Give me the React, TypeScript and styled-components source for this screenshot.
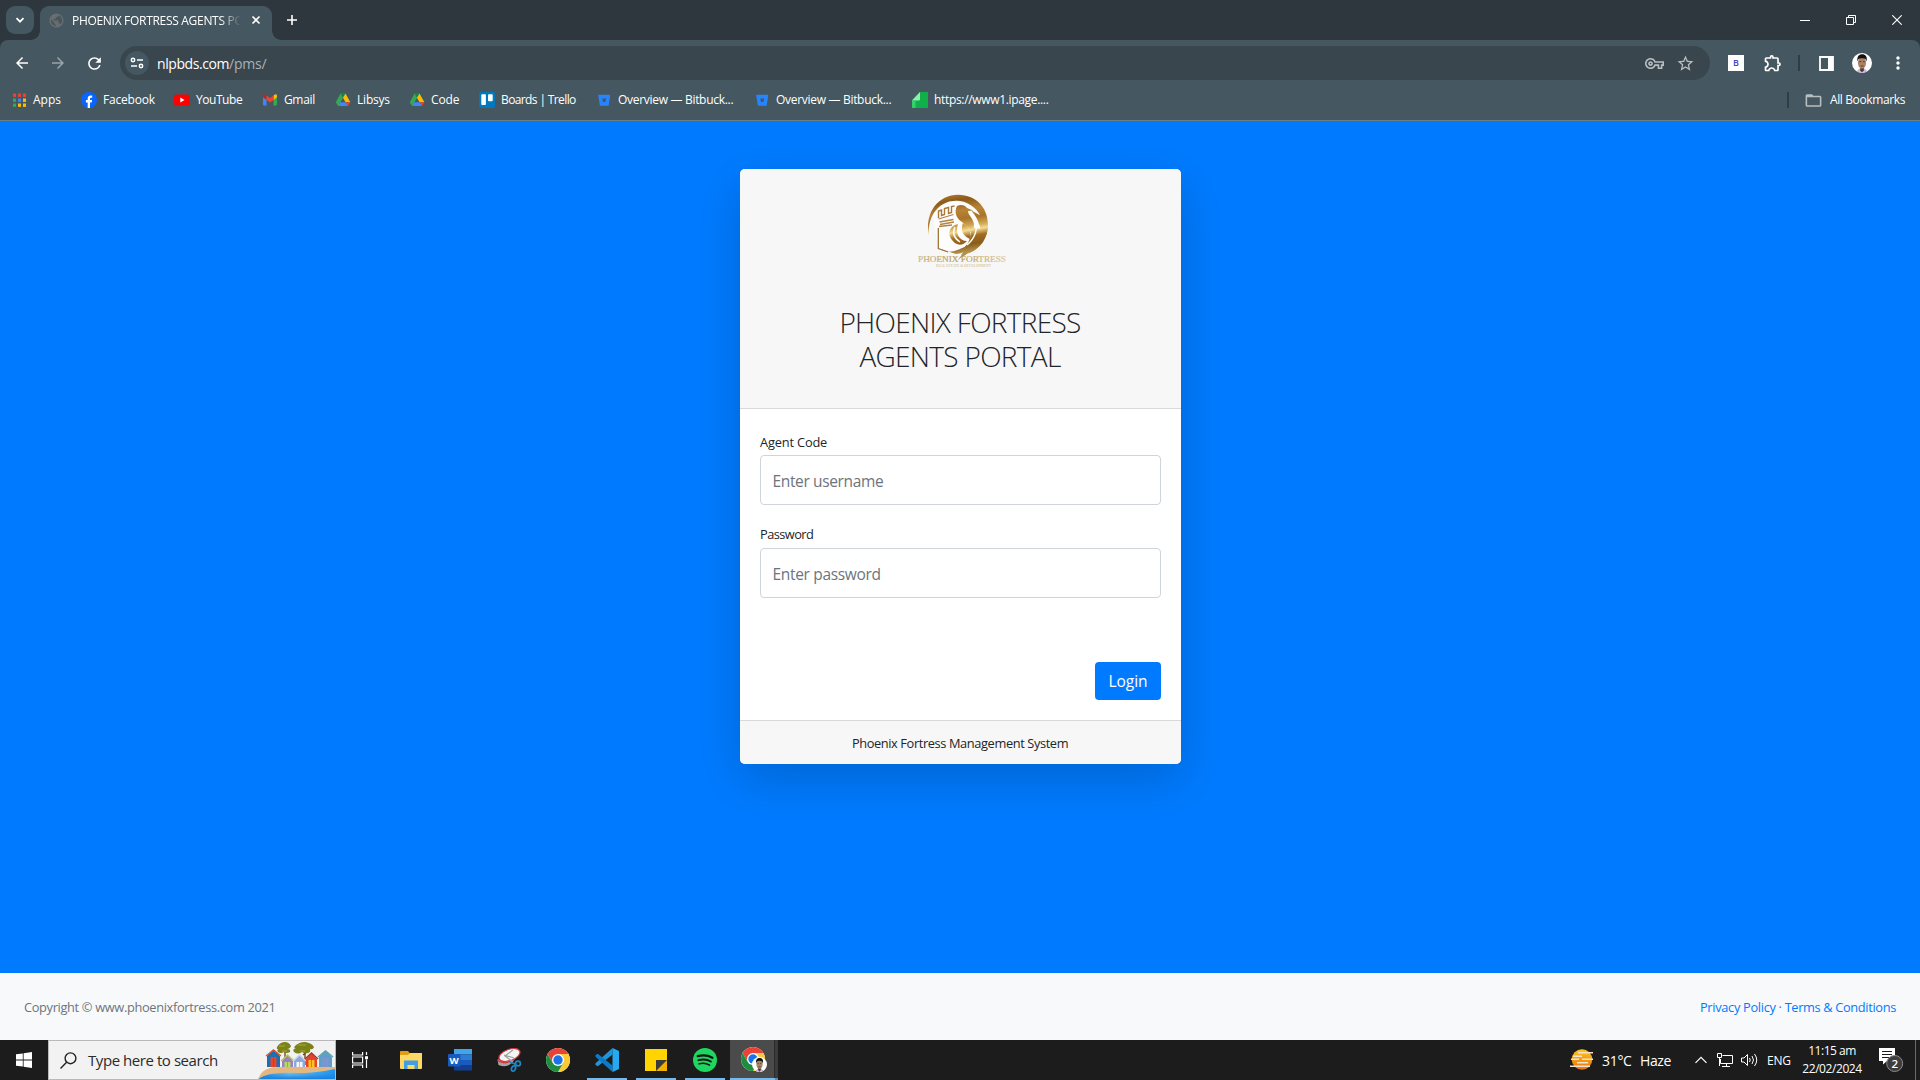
import React from "react";
import styled, { createGlobalStyle, css } from "styled-components";
import {
  MdArrowBack, MdArrowForward, MdRefresh, MdMoreVert, MdFolderOpen, MdPublic,
  MdOutlineVpnKey, MdStarBorder, MdOutlineExtension,
} from "react-icons/md";
import { FaBitbucket } from "react-icons/fa";

const Global = createGlobalStyle`
  * { box-sizing: border-box; }
  html, body { margin: 0; padding: 0; overflow: hidden; }
  body { font-family: "Open Sans", "Noto Sans", sans-serif; }
  svg { display: block; flex: none; }
`;

const Screen = styled.div`
  width: 1920px; height: 1080px; display: flex; flex-direction: column; overflow: hidden;
  background: #007bff;
`;

const Text = styled.span<{ $size?: number; $track?: number; $color?: string; $weight?: number }>`
  font-size: ${(p) => p.$size ?? 12}px;
  letter-spacing: ${(p) => p.$track ?? 0}px;
  color: ${(p) => p.$color ?? "inherit"};
  font-weight: ${(p) => p.$weight ?? 400};
  white-space: nowrap;
`;

/* ---------- browser ---------- */
const TabStrip = styled.div`
  height: 40px; flex: none; background: #2d373d; display: flex; color: #fff;
`;
const TabSearch = styled.div`
  width: 28px; height: 28px; margin: 6px 6px 0; border-radius: 9px; background: #455760;
  display: flex; align-items: center; justify-content: center;
`;
const Tab = styled.div`
  width: 232px; height: 34px; margin-top: 6px; padding: 0 11px 6px 8px; border-radius: 9px 9px 0 0;
  background: #455760; display: flex; align-items: center; position: relative; color: #fff;
  &::before, &::after {
    content: ""; position: absolute; bottom: 0; width: 9px; height: 9px;
  }
  &::before { left: -9px; background: radial-gradient(circle at 0 0, transparent 8.5px, #455760 9px); }
  &::after { right: -9px; background: radial-gradient(circle at 100% 0, transparent 8.5px, #455760 9px); }
`;
const TabTitle = styled.div`
  width: 169px; margin: 0 auto 0 7px; overflow: hidden; line-height: 16px; height: 18px; white-space: nowrap;
  -webkit-mask-image: linear-gradient(90deg, #000 148px, transparent 169px);
  mask-image: linear-gradient(90deg, #000 148px, transparent 169px);
`;
const NewTab = styled.div`
  width: 28px; height: 28px; margin: 6px 0 0 6px; display: flex; align-items: center; justify-content: center;
`;
const WindowButtons = styled.div`
  margin-left: auto; display: flex;
`;
const WindowButton = styled.div`
  width: 46px; height: 40px; display: flex; align-items: center; justify-content: center;
`;
const Toolbar = styled.div`
  height: 40px; flex: none; background: #2d373d;
`;
const ToolbarInner = styled.div`
  height: 40px; background: #455760; border-radius: 8px 8px 0 0; display: flex; align-items: center;
  padding: 6px 11px 0 11px; color: #fff;
`;
const NavButton = styled.div<{ $dim?: boolean }>`
  width: 22px; height: 34px; margin-right: 14px; display: flex; align-items: center; justify-content: center;
  opacity: ${(p) => (p.$dim ? 0.45 : 1)};
`;
const Omnibox = styled.div`
  width: 1590px; height: 34px; margin-left: 1px; border-radius: 17px; background: #39464d; display: flex; align-items: center;
  padding: 0 15px 0 5px;
`;
const SiteInfo = styled.div`
  width: 24px; height: 24px; border-radius: 50%; background: #455760; margin-right: 8px;
  display: flex; align-items: center; justify-content: center;
`;
const OmniIcons = styled.div`
  margin-left: auto; display: flex; align-items: center; gap: 12px; color: #b9bec1;
`;
const ExtBadge = styled.div`
  width: 16px; height: 16px; margin-left: 18px; background: #fff; color: #4747b8; font-size: 9px; line-height: 16px;
  text-align: center; font-weight: 600;
`;
const ToolIcon = styled.div<{ $left: number }>`
  margin-left: ${(p) => p.$left}px; display: flex;
`;
const Divider = styled.div<{ $left: number }>`
  width: 2px; height: 16px; margin-left: ${(p) => p.$left}px; background: #313d44;
`;
const Bookmarks = styled.div`
  height: 41px; flex: none; background: #455760; border-bottom: 1px solid #6f7d84; display: flex;
  align-items: center; padding-left: 11px; color: #fff;
`;
const Bookmark = styled.div<{ $w: number }>`
  width: ${(p) => p.$w}px; display: flex; align-items: center; gap: 6px; line-height: 16px; height: 16px;
`;
const IconBox = styled.div` width: 16px; display: flex; justify-content: center; flex: none; `;
const BookmarksEnd = styled.div`
  margin-left: auto; display: flex; align-items: center; padding-right: 14px;
`;
const AllLabel = styled.div` margin-left: 7px; line-height: 16px; height: 16px; display: flex; width: 76px; `;

/* ---------- page ---------- */
const Page = styled.div`
  flex: 1; display: flex; flex-direction: column; align-items: center; justify-content: space-between;
  color: #212529; min-height: 0;
`;
const Card = styled.div`
  width: 441px; height: 595px; margin: 48px 0 0 1px; border-radius: 5px; background: #fff; overflow: hidden;
  box-shadow: 0 16px 48px rgba(0, 0, 0, 0.175); display: flex; flex-direction: column;
`;
const CardHeader = styled.div`
  height: 240px; flex: none; background: #f7f7f7; border-bottom: 1px solid #d9d9d9;
  display: flex; flex-direction: column; align-items: center; padding: 16px 1px 0 0;
`;
const Heading = styled.h3`
  margin: 30px 0 0; font-weight: 300; text-align: center;
  display: flex; flex-direction: column; align-items: center;
`;
const HeadingLine = styled.div` height: 34px; line-height: 34px; `;
const CardBody = styled.div`
  flex: 1; padding: 20px 20px 20px; display: flex; flex-direction: column;
`;
const Field = styled.label`
  display: flex; flex-direction: column; margin-bottom: 17px;
`;
const FieldLabel = styled.div<{ $line?: number }>`
  height: 26px; line-height: ${(p) => p.$line ?? 25}px; display: flex;
`;
const Input = styled.div`
  height: 50px; border: 1px solid #ced4da; border-radius: 4px; background: #fff; color: #6c757d;
  display: flex; align-items: center; padding: 2px 12px 0 11.5px;
`;
const LoginButton = styled.div`
  align-self: flex-end; margin-top: auto; width: 66px; height: 38px; border-radius: 4px; background: #007bff; color: #fff;
  display: flex; align-items: center; justify-content: center;
`;
const CardFooter = styled.div`
  height: 44px; flex: none; background: #f7f7f7; border-top: 1px solid #d9d9d9; display: flex; align-items: center;
  justify-content: center; padding-right: 1px;
`;
const PageFooter = styled.div`
  align-self: stretch; height: 67px; background: #f8f9fa; display: flex; align-items: center; padding: 0 24px;
  color: #6c757d;
`;
const Links = styled.div` margin-left: auto; display: flex; color: #007bff; `;
const Dot = styled.span` width: 9px; text-align: center; color: #6c757d; font-size: 13px; `;

/* ---------- taskbar ---------- */
const Taskbar = styled.div`
  height: 40px; flex: none; background: #1c1c1c; display: flex; color: #fff;
`;
const Start = styled.div` width: 48px; display: flex; align-items: center; justify-content: center; `;
const Search = styled.div`
  width: 288px; height: 40px; background: #f2f2f2; border: 1px solid #b9b9b9; display: flex; align-items: center;
  padding-left: 11px; color: #2b2b2b;
`;
const SearchText = styled.div` margin-left: 11px; width: 133px; display: flex; `;
const SearchArt = styled.div` margin-left: auto; align-self: flex-end; height: 38px; `;
const TaskItem = styled.div<{ $line?: boolean; $active?: boolean; $ml?: number }>`
  width: 48px; height: 40px; margin-left: ${(p) => p.$ml ?? 1}px; display: flex; align-items: center; justify-content: center;
  ${(p) => p.$line && css`background: linear-gradient(#76b9ed, #76b9ed) 4px 38px / 40px 2px no-repeat;`}
  ${(p) => p.$active && css`background: linear-gradient(#76b9ed, #76b9ed) 0 38px / 45px 2px no-repeat,
    linear-gradient(#5788b0, #5788b0) 45px 38px / 3px 2px no-repeat,
    linear-gradient(#2a2a2a, #2a2a2a) 44px 0 / 1px 40px no-repeat,
    linear-gradient(90deg, #4b4b4b 44px, #3b3b3b 44px);`}
`;
const Tray = styled.div` margin-left: auto; display: flex; align-items: center; padding-right: 4px; `;
const TrayCell = styled.div<{ $w: number; $pad?: number }>`
  width: ${(p) => p.$w}px; padding-left: ${(p) => p.$pad ?? 0}px; display: flex; align-items: center;
`;
const Clock = styled.div` width: 76px; display: flex; flex-direction: column; align-items: center; line-height: 18px; `;
const DesktopEdge = styled.div` width: 1px; height: 40px; background: #6b6b6b; `;

/* ---------- drawings ---------- */
const AppsIcon = () => {
  const c = ["#ea4335", "#ea4335", "#ea4335", "#34a853", "#4285f4", "#fbbc04", "#34a853", "#fbbc04", "#fbbc04"];
  return (
    <svg width="16" height="16">
      {c.map((f, i) => <rect key={i} x={2 + (i % 3) * 5} y={1.5 + Math.floor(i / 3) * 5} width="3" height="3.4" fill={f} />)}
    </svg>
  );
};
const FacebookIcon = () => (
  <svg width="16" height="16" viewBox="0 0 16 16">
    <circle cx="8" cy="8" r="8" fill="#0866ff" />
    <path d="M6.7 15.9V10.4H4.9V8h1.8V6.8c0-2.2 1-3.3 3.1-3.3.4 0 1.1.1 1.4.2v2h-.8c-1 0-1.4.4-1.4 1.4V8h2.1l-.4 2.4H9v5.5z" fill="#fff" />
  </svg>
);
const YouTubeIcon = () => (
  <svg width="16" height="16" viewBox="0 0 16 16">
    <rect y="2.5" width="16" height="11" rx="2.6" fill="#f00" />
    <path d="M6.3 5.6v4.8L10.5 8z" fill="#fff" />
  </svg>
);
const GmailIcon = () => (
  <svg width="16" height="16" viewBox="0 0 16 16">
    <path d="M1 4.5l3.5 2.6v6.4H2a1 1 0 0 1-1-1z" fill="#4285f4" />
    <path d="M15 4.5l-3.5 2.6v6.4H14a1 1 0 0 0 1-1z" fill="#34a853" />
    <path d="M11.5 3.5L13 2.6c1-.6 2 0 2 1.2v1.4l-3.5 2.7z" fill="#fbbc04" />
    <path d="M1 3.8c0-1.2 1-1.8 2-1.2l1.5.9v4.4L1 5.2z" fill="#c5221f" />
    <path d="M4.5 3.5L8 6.1l3.5-2.6v4.4L8 10.5 4.5 7.9z" fill="#ea4335" />
  </svg>
);
const DriveIcon = () => (
  <svg width="16" height="16" viewBox="0 0 16 16">
    <path d="M5.5 1.5h5L5 11.3 3 14 .8 10.3z" fill="#34a853" />
    <path d="M5.5 1.5h5L8 5.7z" fill="#188038" />
    <path d="M8 5.7l2.5-4.2 4.9 8.8h-4.9z" fill="#fbbc04" />
    <path d="M15.4 10.3L13 14l-2.5-3.7z" fill="#ea4335" />
    <path d="M5.5 10.3h5L13 14H3z" fill="#4285f4" />
  </svg>
);
const TrelloIcon = () => (
  <svg width="16" height="16" viewBox="0 0 16 16">
    <rect width="16" height="16" rx="2" fill="#0079bf" />
    <rect x="2.3" y="2.3" width="4.6" height="10.7" rx=".8" fill="#fff" />
    <rect x="9" y="2.3" width="4.7" height="7" rx=".8" fill="#fff" />
  </svg>
);
const PageIcon = () => (
  <svg width="16" height="16" viewBox="0 0 16 16">
    <path d="M8 0h7a1 1 0 0 1 1 1v14a1 1 0 0 1-1 1H1a1 1 0 0 1-1-1V8z" fill="#0fb04a" />
    <path d="M8 0v7.5a1 1 0 0 1-1 1H0z" fill="#8ff0ae" />
    <path d="M0 8.5h3.5V16H1a1 1 0 0 1-1-1z" fill="#35cf6b" />
  </svg>
);
const Face = ({ size }: { size: number }) => (
  <svg width={size} height={size} viewBox="0 0 20 20">
    <circle cx="10" cy="10" r="10" fill="#fff" />
    <path d="M4.5 18.2l3-2.7h5l3 2.7Q10 21.5 4.5 18.2z" fill="#c9b7d6" />
    <path d="M8.2 14h3.6v3.2L10 19.5l-1.8-2.3z" fill="#4a3a3a" />
    <ellipse cx="10" cy="9.8" rx="4.1" ry="5.9" fill="#a98467" />
    <path d="M5.5 8.5C4.7 3.2 7 1.2 10.2 1.2s5.4 2.1 4.3 7.3l-.8-2.3C12 4.8 8 4.8 6.3 6.2z" fill="#12110f" />
    <path d="M7.2 8.7h2m1.6 0h2M8.5 13h3" stroke="#4d382c" strokeWidth=".9" />
  </svg>
);
const ChromeIcon = ({ size }: { size: number }) => (
  <svg width={size} height={size} viewBox="0 0 24 24">
    <circle cx="12" cy="12" r="12" fill="#fff" />
    <path d="M12 6h10.39A12 12 0 0 0 1.61 6L6.8 15z" fill="#ea4335" />
    <path d="M17.2 15L12 24A12 12 0 0 0 22.39 6H12z" fill="#fcc934" />
    <path d="M6.8 15L1.61 6A12 12 0 0 0 12 24l5.2-9z" fill="#1e8e3e" />
    <circle cx="12" cy="12" r="6" fill="#fff" />
    <circle cx="12" cy="12" r="4.7" fill="#1a73e8" />
  </svg>
);
const ActiveChrome = () => (
  <svg width="26" height="26" viewBox="0 0 26 26">
    <ChromeIcon size={24} />
    <svg x="11" y="10"><Face size={15} /></svg>
  </svg>
);

const Logo = () => (
  <svg width="120" height="90" viewBox="0 0 120 90">
    <defs>
      <linearGradient id="gold" gradientUnits="userSpaceOnUse" x1="50" y1="10" x2="60" y2="70">
        <stop offset="0" stopColor="#a87832" /><stop offset=".1" stopColor="#8b5a18" />
        <stop offset=".28" stopColor="#b98435" /><stop offset=".42" stopColor="#a8742a" />
        <stop offset=".55" stopColor="#d3a954" /><stop offset=".62" stopColor="#f3dc94" />
        <stop offset=".72" stopColor="#a26d22" /><stop offset=".85" stopColor="#8a5c1c" />
        <stop offset="1" stopColor="#bfa05a" />
      </linearGradient>
      <linearGradient id="letters" x1="0" x2="1">
        <stop offset="0" stopColor="#cdb985" /><stop offset=".45" stopColor="#b99d5c" /><stop offset="1" stopColor="#dccb9c" />
      </linearGradient>
    </defs>
    <path d="M33 28L50 17h16l16 12v20L66 67l-12 2-16-4z" fill="#fdfdfd" />
    <path d="M29 51C24 27 39 9.8 58 9.8c19 0 30 14 30 30.500 0 13-8 23.500-18 27.500l-8 2.500c2-3 5-5 5-8 6-5 9-11 9-17 5-1 5-3 3-6-1-5-4-9-8-14l9 5c-4-8-12-13.500-22-14.500C42 14.500 27 28 29 51z" fill="url(#gold)" />
    <path d="M71 41q6 6 17-1-1 18-17 27l-10 3q4-5 4-8 7-7 6-21z" fill="url(#gold)" />
    <path d="M57 21c4-2 8-1 10 2l6 2.500-5 .5c0 4 5 7 6 13 0 4-1 6-3 9-2-5-5-8-9-11-6-4-8-10-5-16z" fill="url(#gold)" />
    <path d="M58 39c-9 2-11 10-6 16 4 6 11 6 15 1-8 0-12-8-9-17z" fill="url(#gold)" />
    <path d="M63 38c-3 7 0 13 7 16 2-6-1-12-7-16zM40 64c6 4 13 3 20 0 4-2 8-3 10-7 0 8-8 12-14 12z" fill="url(#gold)" />
    <path d="M55 42c-3 6-1 11 5 15M75 33c4 13-1 21-8 27" fill="none" stroke="#fffdf4" strokeWidth="1.5" />
    <path d="M38.5 33v-7l3-1v5.500l3-1v-6l4-1v6l3-1v-6l3-.5" fill="none" stroke="#a97836" strokeWidth="1.4" />
    <path d="M38.500 34l15-4.500M39.500 37l14-2.500M40 39.500l14-2.500M39 41.500l13-1.500" fill="none" stroke="#b28443" strokeWidth="1.300" />
    <path d="M38.300 43v20.500l10 3.500" fill="none" stroke="#9b7433" strokeWidth="1.300" />
    <path d="M58 75c2-4 5-5 6-9l4 1c-2 4-6 4-10 8z" fill="#b39049" />
    <text x="18" y="76.5" textLength="88" lengthAdjust="spacingAndGlyphs" fontFamily="Liberation Serif, serif" fontSize="8.800" stroke="url(#letters)" strokeWidth=".2" fill="url(#letters)">PHOENIX FORTRESS</text>
    <text x="36" y="81.800" textLength="55" lengthAdjust="spacingAndGlyphs" fontFamily="Liberation Serif, serif" fontSize="3.400" fill="#cdb987">REAL ESTATE &amp; DEVELOPMENT</text>
  </svg>
);

const hutData: [number, string, string, string][] = [
  [10, "#1c6fb5", "#e8452c", "#d9562b"], [25, "#9b7fc7", "#b6d957", "#b7c858"],
  [37, "#8aa9dc", "#f5f7fb", "#c5d6ef"], [49, "#e8412f", "#ffc21c", "#b13427"], [62, "#5f9fca", "#8193d2", "#5aa6a4"],
];
const BeachArt = () => (
  <svg width="78" height="38" viewBox="0 0 78 38">
    <defs>
      <linearGradient id="sea" x1="0" x2="1"><stop offset="0" stopColor="#1c86e0" /><stop offset=".4" stopColor="#a9e6f2" /><stop offset="1" stopColor="#1d93f0" /></linearGradient>
      <linearGradient id="deep" x1="0" y1="0" x2="0" y2="1"><stop offset="0" stopColor="#1d93f0" stopOpacity="0" /><stop offset="1" stopColor="#1580e0" /></linearGradient>
    </defs>
    <path d="M1 38c4-9 9-12 22-12h55v12z" fill="#e3b77f" />
    <path d="M2 38c6-5 18-7 40-6 14 0 26-2 36-4v10z" fill="url(#sea)" />
    <path d="M2 38c6-5 18-7 40-6 14 0 26-2 36-4v10z" fill="url(#deep)" />
    <path d="M28 4v20M48 4v20M46 14l6-5" stroke="#6d4a22" strokeWidth="1.4" />
    <path d="M20 6q3-5 8-5 4 0 6 4-1 3-4 3 4 0 3 3-4 2-6 0-3 2-6 0-2-3 2-3-4 1-3-2zM38 5q4-4 10-4 7 1 9 5-1 3-4 2 1 3-2 4-4 1-6-1-4 3-8 0-2-3 2-4-3 0-1-2z" fill="#7b8218" />
    <path d="M22 5h6M41 4h8M43 10h5M25 10h5" stroke="#a9a93a" strokeWidth="1.2" />
    {hutData.map(([x, wall, door, roof], i) => {
      const t = [9, 14, 14, 12, 10][i];
      const w = i === 0 || i === 4 ? 13 : 11;
      const e = t + 6;
      return (
        <g key={i}>
          <path d={`M${x} ${e}l${w / 2} ${t - e}l${w / 2} ${e - t}V26H${x}z`} fill={wall} />
          <path d={`M${x - 1} ${e}l${w / 2 + 1} ${t - e}l${w / 2 + 1} ${e - t}`} fill="none" stroke={roof} strokeWidth="1.5" />
          <rect x={x + w / 2 - 3} y={e + 1} width="6" height={25 - e} fill={door} />
          <path d={`M${x + w / 2} ${e + 1}V26`} stroke={wall} strokeWidth=".7" />
        </g>
      );
    })}
  </svg>
);

const ExplorerIcon = () => (
  <svg width="24" height="24" viewBox="0 0 24 24">
    <path d="M1 4a1 1 0 0 1 1-1h7l2 2.5h11.5V20H1z" fill="#e09c12" />
    <path d="M1 7h8l2-2h12v15a1 1 0 0 1-1 1H2a1 1 0 0 1-1-1z" fill="#ffd767" />
    <path d="M5 12.5h14V21h-3.5v-4h-7v4H5z" fill="#3f9fe0" />
  </svg>
);
const WordIcon = () => (
  <svg width="24" height="24" viewBox="0 0 24 24">
    <path d="M6 1h18v5.5H6z" fill="#41a5ee" /><path d="M6 6.5h18V12H6z" fill="#2b7cd3" />
    <path d="M6 12h18v5H6z" fill="#185abd" /><path d="M6 17h18v5.5H6z" fill="#103f91" />
    <rect x="0" y="6" width="12.5" height="12.5" rx="1" fill="#185abd" />
    <text x="6.2" y="15.8" fontSize="9.5" fontWeight="700" textAnchor="middle" fill="#fff">W</text>
  </svg>
);
const SnipIcon = () => (
  <svg width="26" height="26" viewBox="0 0 26 26">
    <path d="M1.500 13l1 5q9 3.500 14-3l7-9-3-4z" fill="#a3a3a8" />
    <path d="M1.500 12.500l1 1.500q8 4 13-1l8-9" fill="none" stroke="#d5343a" strokeWidth="1.2" />
    <ellipse cx="13.5" cy="8" rx="11" ry="5.6" transform="rotate(-20 13.5 8)" fill="#f4f4f4" stroke="#d5343a" strokeWidth="1.2" />
    <path d="M17 3L9 9l8 6M8 8l10 3" fill="none" stroke="#9aa0a6" strokeWidth="1.2" />
    <circle cx="22" cy="16.5" r="2.4" fill="none" stroke="#1b86c8" strokeWidth="1.7" />
    <ellipse cx="17.5" cy="21.5" rx="1.9" ry="2.8" fill="none" stroke="#1b86c8" strokeWidth="1.7" transform="rotate(25 17.5 21.5)" />
    <path d="M14 15.5l6 1.5M18.5 19l1-3" stroke="#1b86c8" strokeWidth="1.5" />
  </svg>
);
const CodeIcon = () => (
  <svg width="24" height="24" viewBox="0 0 24 24">
    <path d="M17.5 0v6.5L2.8 18.2.5 17v-1.7z" fill="#1f95dc" />
    <path d="M17.5 24v-6.5L2.8 5.8.5 7v1.7z" fill="#0e7ac4" />
    <path d="M17.5 0L24 2.9v18.2L17.5 24z" fill="#27a9f2" />
  </svg>
);
const NotesIcon = () => (
  <svg width="22" height="22" viewBox="0 0 22 22">
    <path d="M0 0h22v22H0z" fill="#ffd400" /><path d="M11 22V11h11v11z" fill="#f2b200" />
    <path d="M11 22V11h11z" fill="#3b3b3b" />
  </svg>
);
const SpotifyIcon = () => (
  <svg width="24" height="24" viewBox="0 0 24 24">
    <circle cx="12" cy="12" r="12" fill="#1ed760" />
    <path d="M4.8 8.2q8-2.2 14.6 1.5" stroke="#161616" strokeWidth="2.3" fill="none" strokeLinecap="round" />
    <path d="M5.4 12.2q7-2 12.5 1.3" stroke="#161616" strokeWidth="1.9" fill="none" strokeLinecap="round" />
    <path d="M5.9 15.9q6-1.6 10.7 1.2" stroke="#161616" strokeWidth="1.5" fill="none" strokeLinecap="round" />
  </svg>
);
const HazeIcon = () => (
  <svg width="24" height="22" viewBox="0 0 24 22">
    <defs><linearGradient id="sun" x1="0" y1="0" x2="0" y2="1"><stop offset="0" stopColor="#ffc81a" /><stop offset="1" stopColor="#e8700f" /></linearGradient></defs>
    <circle cx="12" cy="10.5" r="10.3" fill="url(#sun)" />
    <path d="M8 3.8h15M3 7.2h9M12 10.3h11M1 10.3h8M7 13.8h11M0 17.2h20" stroke="#f3e3cf" strokeWidth="1.5" />
  </svg>
);

const bookmarks: { label: string; w: number; track: number; icon: React.ReactNode }[] = [
  { label: "Apps", w: 70, track: 0, icon: <AppsIcon /> },
  { label: "Facebook", w: 93, track: -0.2, icon: <FacebookIcon /> },
  { label: "YouTube", w: 88, track: -0.45, icon: <YouTubeIcon /> },
  { label: "Gmail", w: 73, track: -0.35, icon: <GmailIcon /> },
  { label: "Libsys", w: 74, track: -0.2, icon: <DriveIcon /> },
  { label: "Code", w: 70, track: -0.1, icon: <DriveIcon /> },
  { label: "Boards | Trello", w: 117, track: -0.62, icon: <TrelloIcon /> },
  { label: "Overview — Bitbuck...", w: 158, track: -0.3, icon: <FaBitbucket size={12.5} color="#2684ff" /> },
  { label: "Overview — Bitbuck...", w: 158, track: -0.3, icon: <FaBitbucket size={12.5} color="#2684ff" /> },
  { label: "https://www1.ipage....", w: 150, track: -0.33, icon: <PageIcon /> },
];

export default function App() {
  return (
    <>
      <Global />
      <Screen>
        <TabStrip>
          <TabSearch>
            <svg width="10" height="8"><path d="M1.5 2.2L5 5.7l3.5-3.5" fill="none" stroke="#fff" strokeWidth="1.8" /></svg>
          </TabSearch>
          <Tab>
            <MdPublic size={17} color="#6a6c6e" />
            <TabTitle><Text $track={-0.3}>PHOENIX FORTRESS AGENTS PO</Text></TabTitle>
            <svg width="10" height="10"><path d="M1.5 1.5l7 7m0-7l-7 7" stroke="#fff" strokeWidth="1.6" /></svg>
          </Tab>
          <NewTab><svg width="12" height="12"><path d="M6 1v10M1 6h10" stroke="#fff" strokeWidth="1.6" /></svg></NewTab>
          <WindowButtons>
            <WindowButton><svg width="10" height="10"><path d="M0 5.5h10" stroke="#fff" /></svg></WindowButton>
            <WindowButton><svg width="10" height="10"><path d="M.5 2.5h7v7h-7zM2.5 2.5v-2h7v7h-2" fill="none" stroke="#fff" /></svg></WindowButton>
            <WindowButton><svg width="10" height="10"><path d="M.3.3l9.4 9.4m0-9.4L.3 9.7" stroke="#fff" strokeWidth="1.1" /></svg></WindowButton>
          </WindowButtons>
        </TabStrip>
        <Toolbar>
          <ToolbarInner>
            <NavButton><MdArrowBack size={18} /></NavButton>
            <NavButton $dim><MdArrowForward size={18} /></NavButton>
            <NavButton><MdRefresh size={19} /></NavButton>
            <Omnibox>
              <SiteInfo>
                <svg width="14" height="14" fill="none" stroke="#fff" strokeWidth="1.5">
                  <circle cx="3" cy="4" r="1.7" /><path d="M7 4h6M1 10h6" /><circle cx="11" cy="10" r="1.7" />
                </svg>
              </SiteInfo>
              <Text $size={14} $track={-0.42}>nlpbds.com</Text>
              <Text $size={14} $track={-0.2} $color="#a9b1b5">/pms/</Text>
              <OmniIcons><MdOutlineVpnKey size={19} /><MdStarBorder size={19} /></OmniIcons>
            </Omnibox>
            <ExtBadge>B</ExtBadge>
            <ToolIcon $left={19}><MdOutlineExtension size={20} /></ToolIcon>
            <Divider $left={15} />
            <ToolIcon $left={19}>
              <svg width="15" height="15"><path d="M1 1h13v13H1z" fill="none" stroke="#fff" strokeWidth="1.8" /><path d="M9 1h5v13H9z" fill="#fff" /></svg>
            </ToolIcon>
            <ToolIcon $left={18}><Face size={20} /></ToolIcon>
            <ToolIcon $left={16}><MdMoreVert size={20} /></ToolIcon>
          </ToolbarInner>
        </Toolbar>
        <Bookmarks>
          {bookmarks.map((b, i) => (
            <Bookmark key={i} $w={b.w}><IconBox>{b.icon}</IconBox><Text $track={b.track}>{b.label}</Text></Bookmark>
          ))}
          <BookmarksEnd>
            <Divider $left={0} />
            <ToolIcon $left={15}><MdFolderOpen size={19} color="#b9bec1" /></ToolIcon>
            <AllLabel><Text $track={-0.38}>All Bookmarks</Text></AllLabel>
          </BookmarksEnd>
        </Bookmarks>

        <Page>
          <Card>
            <CardHeader>
              <Logo />
              <Heading>
                <HeadingLine><Text $size={28} $weight={300} $track={-0.7}>PHOENIX FORTRESS</Text></HeadingLine>
                <HeadingLine><Text $size={28} $weight={300} $track={-0.7}>AGENTS PORTAL</Text></HeadingLine>
              </Heading>
            </CardHeader>
            <CardBody>
              <Field><FieldLabel $line={27}><Text $size={12.8} $track={-0.16}>Agent Code</Text></FieldLabel><Input><Text $size={15.5} $track={-0.36}>Enter username</Text></Input></Field>
              <Field><FieldLabel><Text $size={12.8} $track={-0.55}>Password</Text></FieldLabel><Input><Text $size={15.5} $track={-0.33}>Enter password</Text></Input></Field>
              <LoginButton><Text $size={15.5}>Login</Text></LoginButton>
            </CardBody>
            <CardFooter><Text $size={12.8} $track={-0.38}>Phoenix Fortress Management System</Text></CardFooter>
          </Card>
          <PageFooter>
            <Text $size={12.8} $track={-0.33}>Copyright © www.phoenixfortress.com 2021</Text>
            <Links><Text $size={12.8} $track={-0.3}>Privacy Policy</Text><Dot>·</Dot><Text $size={12.8} $track={-0.34}>Terms &amp; Conditions</Text></Links>
          </PageFooter>
        </Page>

        <Taskbar>
          <Start>
            <svg width="16" height="16" fill="#fff"><path d="M0 2.3l6.8-.9v6.2H0zM7.6 1.3L16 0v7.6H7.6zM0 8.4h6.8v6.2L0 13.7zM7.6 8.4H16V16l-8.4-1.2z" /></svg>
          </Start>
          <Search>
            <svg width="17" height="17"><circle cx="10.5" cy="6.3" r="5.4" fill="none" stroke="#222" strokeWidth="1.4" /><path d="M6.6 10.3L.5 16.4" stroke="#222" strokeWidth="1.4" /></svg>
            <SearchText><Text $size={15} $track={-0.44}>Type here to search</Text></SearchText>
            <SearchArt><BeachArt /></SearchArt>
          </Search>
          <TaskItem $ml={0}>
            <svg width="16" height="16" fill="none" stroke="#fff" strokeWidth="1.2"><path d="M.6 0v3h10V0M.6 16v-3h10v3M.6 5h10v6H.6zM14.5 0v3M14.5 7.5V16" /><path d="M13 4.2h3v3h-3z" fill="#fff" stroke="none" /></svg>
          </TaskItem>
          <TaskItem $ml={3}><ExplorerIcon /></TaskItem>
          <TaskItem><WordIcon /></TaskItem>
          <TaskItem><SnipIcon /></TaskItem>
          <TaskItem><ChromeIcon size={24} /></TaskItem>
          <TaskItem $line><CodeIcon /></TaskItem>
          <TaskItem $line><NotesIcon /></TaskItem>
          <TaskItem $line><SpotifyIcon /></TaskItem>
          <TaskItem $active><ActiveChrome /></TaskItem>
          <Tray>
            <TrayCell $w={32}><HazeIcon /></TrayCell>
            <TrayCell $w={38}><Text $size={14} $track={-0.3}>31°C</Text></TrayCell>
            <TrayCell $w={55}><Text $size={14} $track={-0.4}>Haze</Text></TrayCell>
            <TrayCell $w={22}><svg width="12" height="8"><path d="M.5 6.8L6 1.3l5.5 5.5" fill="none" stroke="#fff" strokeWidth="1.2" /></svg></TrayCell>
            <TrayCell $w={24}>
              <svg width="17" height="15" fill="none" stroke="#fff"><path d="M5.5 2.5h10v8H3.5V6M9.5 10.5v3M5 13.5h8" /><path d="M.5.5h4v4h-4zM2.5 4.5V13" /></svg>
            </TrayCell>
            <TrayCell $w={26}>
              <svg width="17" height="14" fill="none" stroke="#fff"><path d="M.5 5v4H3l3.5 3.5v-11L3 5zM8.5 5q1.500 2 0 4M11 3q3 4 0 8M13.500 1q4.500 6 0 12" /></svg>
            </TrayCell>
            <TrayCell $w={27}><Text $track={-0.2}>ENG</Text></TrayCell>
            <Clock><Text $track={-0.5}>11:15 am</Text><Text $track={-0.42}>22/02/2024</Text></Clock>
            <TrayCell $w={45} $pad={9}>
              <svg width="25" height="26" viewBox="0 0 25 26">
                <path d="M0 1h16v13H8l-4 3.5V14H0z" fill="#fff" /><path d="M3 4.5h10M3 7.5h10M3 10.5h7" stroke="#1c1c1c" />
                <circle cx="15.7" cy="16.5" r="8" fill="#3d3d3d" stroke="#8a8a8a" /><text x="15.7" y="20.6" fontSize="11.5" fontWeight="600" textAnchor="middle" fill="#fff">2</text>
              </svg>
            </TrayCell>
            <DesktopEdge />
          </Tray>
        </Taskbar>
      </Screen>
    </>
  );
}
